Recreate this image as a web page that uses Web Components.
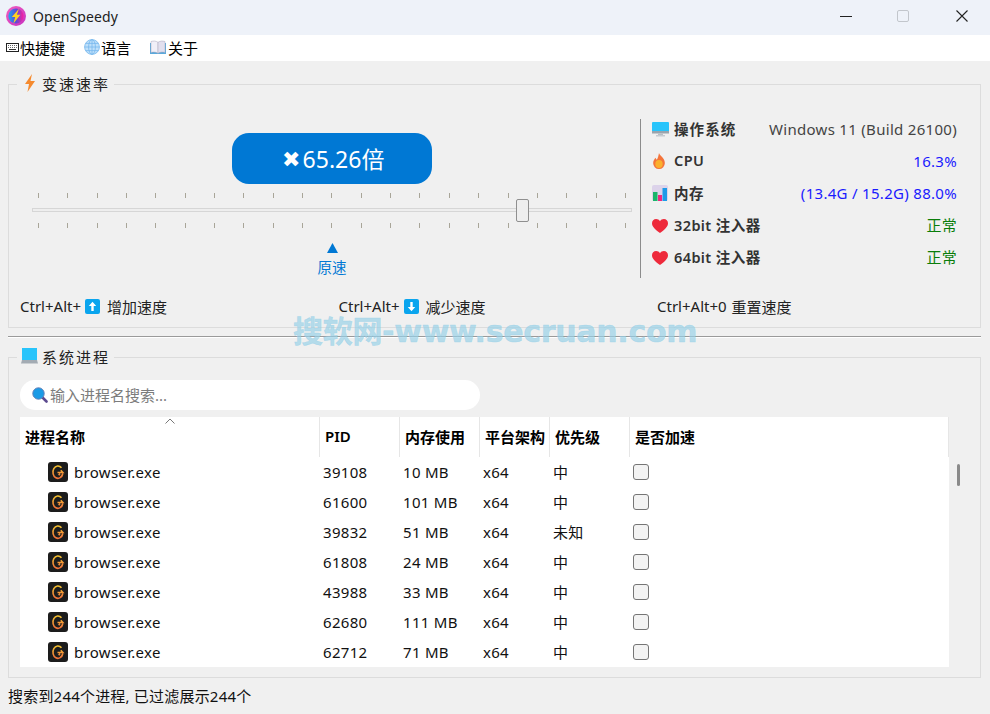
<!DOCTYPE html>
<html lang="zh">
<head>
<meta charset="utf-8">
<title>OpenSpeedy</title>
<style>
  html, body { margin: 0; height: 100%; overflow: hidden; background: #f0f0f0; }
  body { font-family: "Noto Sans", "Noto Sans CJK SC", sans-serif; font-size: 15px; color: #111; }
  os-app { position: relative; }
</style>
</head>
<body>
<os-app></os-app>
<script>
(function () {
  'use strict';

  const icons = {
    app: `<svg width="20" height="20" viewBox="0 0 20 20"><defs><linearGradient id="r" x1="0" y1="0" x2="1" y2="1"><stop offset="0" stop-color="#f25fc0"/><stop offset="1" stop-color="#c72fc0"/></linearGradient><linearGradient id="c" x1="0" y1="0" x2="1" y2="0"><stop offset="0" stop-color="#1ea8f0"/><stop offset=".5" stop-color="#5a4ad8"/><stop offset="1" stop-color="#ff1f9c"/></linearGradient></defs><circle cx="10" cy="10" r="10" fill="url(#r)"/><circle cx="10" cy="10" r="7.600" fill="url(#c)"/><path d="M13 2.800 5.800 11h3.400l-1.800 6.400 7-8.600h-3.600z" fill="#ffd21f"/></svg>`,
    keyboard: `<svg width="15" height="12" viewBox="0 0 15 12"><rect x="1.500" y="2.500" width="12" height="8" fill="#fff" stroke="#222"/><path d="M3 4.500h9M3 6.500h9" stroke="#666" stroke-dasharray="1 1"/><path d="M4 8.500h7" stroke="#333"/></svg>`,
    globe: `<svg width="16" height="16" viewBox="0 0 16 16"><circle cx="8" cy="8" r="7.500" fill="#bfe0fa"/><g fill="none" stroke="#76b8ee" stroke-width=".8"><circle cx="8" cy="8" r="7.400"/><ellipse cx="8" cy="8" rx="3.400" ry="7.400"/><path d="M8 .6v14.800M.6 8h14.800M1.700 4.400h12.600M1.700 11.600h12.600"/></g></svg>`,
    book: `<svg width="16" height="15" viewBox="0 0 16 15"><path d="M0 3h16v11H0z" fill="#5aa9dc"/><path d="M1 1.500c2.500-.8 5-.6 7 .8v11c-2-1.400-4.500-1.500-7-.8z" fill="#f1eff8" stroke="#a8a5ba" stroke-width=".5"/><path d="M15 1.500c-2.500-.8-5-.6-7 .8v11c2-1.400 4.500-1.500 7-.8z" fill="#e2dfee" stroke="#a8a5ba" stroke-width=".5"/></svg>`,
    bolt: `<svg width="17" height="18" viewBox="0 0 17 18"><path d="M11 0 4 10h4l-1.500 8L14 7H9.500z" fill="#f58a2e"/></svg>`,
    monitor: `<svg width="17" height="15" viewBox="0 0 17 15"><rect y="0" width="17" height="10.500" rx="1" fill="#28c4fb"/><path d="M0 9h17v2.500H0z" fill="#9aa4ad"/><path d="M6 11.500h5v2H6z" fill="#b8bec4"/><path d="M4 13h9v1.500H4z" fill="#c6cbd0"/></svg>`,
    flame: `<svg width="14" height="16" viewBox="0 0 14 16"><path d="M7 0c.6 2.500 5.800 5 5.800 9.800A5.800 5.800 0 0 1 7 16a5.800 5.800 0 0 1-5.800-6.200C1.200 7.500 2.600 6 3.500 4.700 4 6 4.600 6.500 5 6.500 5.800 5 6.600 2.500 7 0z" fill="#f4743b"/><ellipse cx="7" cy="11" rx="3.700" ry="4" fill="#fbb02d"/></svg>`,
    chart: `<svg width="16" height="16" viewBox="0 0 16 16"><rect width="16" height="16" rx="2" fill="#dcd3ea"/><rect x="1" y="7" width="4.500" height="9" fill="#19b56b"/><rect x="6" y="10" width="4" height="6" fill="#f0287f"/><rect x="10.500" y="3" width="4.500" height="13" fill="#1d9be8"/></svg>`,
    heart: `<svg width="16" height="16" viewBox="0 0 16 16"><path d="M8 16C3 12.200 0 9.500 0 6.200 0 3.800 1.800 2 4.100 2 5.700 2 7.200 2.800 8 4.200 8.800 2.800 10.300 2 11.900 2 14.200 2 16 3.800 16 6.200 16 9.500 13 12.200 8 16z" fill="#ee2a3b"/></svg>`,
    up: `<svg width="15" height="15" viewBox="0 0 15 15"><rect width="15" height="15" rx="2" fill="#0aa5ee"/><path d="M7.500 2.800 11.200 7H8.700v5H6.300V7H3.800z" fill="#fff"/></svg>`,
    down: `<svg width="15" height="15" viewBox="0 0 15 15"><rect width="15" height="15" rx="2" fill="#0aa5ee"/><path d="M7.500 12.200 3.800 8h2.500V3h2.400v5h2.500z" fill="#fff"/></svg>`,
    laptop: `<svg width="17" height="16" viewBox="0 0 17 16"><rect x="1" y="0" width="15" height="12" fill="#28c4fb"/><path d="M1 12h15l1 3.500H0z" fill="#a3abb3"/></svg>`,
    search: `<svg width="16" height="16" viewBox="0 0 16 16"><path d="m9.500 9.500 5 5" stroke="#5c4a8f" stroke-width="2.600" stroke-linecap="round"/><circle cx="6.500" cy="6.500" r="5.700" fill="#1b9be6" stroke="#5f7fb8" stroke-width="1"/></svg>`,
    browser: `<svg width="20" height="20" viewBox="0 0 20 20"><defs><linearGradient id="g" x1="0" y1="0" x2="0" y2="1"><stop offset="0" stop-color="#f2c230"/><stop offset="1" stop-color="#f0703a"/></linearGradient></defs><rect width="20" height="20" rx="3" fill="#1c1c1c"/><path d="M13.500 5.800A5 6.200 0 1 0 14.800 11.500M9.500 10.500h5.300l-2-2.200M12 11.500l-1.300 1.800" fill="none" stroke="url(#g)" stroke-width="1.600"/></svg>`
  };

  // base for every element here: shadow root filled from a string
  class ShadowElement extends HTMLElement {
    constructor() {
      super();
      this.attachShadow({ mode: 'open' }).innerHTML = this.template();
    }
    template() { return ''; }
  }

  class OsTitlebar extends ShadowElement {
    template() {
      return `<style>
        :host { display: flex; align-items: center; height: 35px; background: #eef2f9; flex: none; }
        .logo { display: flex; margin: -3px 7px 0 6px; }
        .title { font-size: 14px; letter-spacing: .1px; color: #222; flex: 1; margin-top: -3px; }
        .ctl { display: flex; width: 58px; justify-content: center; margin-top: -3px; }
        svg { display: block; }
      </style>
      <span class="logo">${icons.app}</span>
      <span class="title">OpenSpeedy</span>
      <span class="ctl" style="margin-right:-1px"><svg width="12" height="12"><path d="M0 6.500h12" stroke="#222"/></svg></span>
      <span class="ctl" style="margin-right:1px"><svg width="12" height="12"><rect x=".5" y=".5" width="11" height="11" rx="1.500" fill="none" stroke="#c2c6cc"/></svg></span>
      <span class="ctl" style="margin-right:-1px"><svg width="12" height="12"><path d="m.5.500 11 11m0-11-11 11" stroke="#222" stroke-width="1.100"/></svg></span>`;
    }
  }

  class OsMenubar extends ShadowElement {
    template() {
      return `<style>
        :host { display: flex; align-items: center; height: 26px; box-sizing: border-box; padding: 0 0 2px 5px; background: #fff; flex: none; gap: 19px; color: #000; font-size: 15px; }
        span { display: flex; align-items: center; gap: 1px; }
        svg { display: block; }
      </style>
      <span style="gap:0">${icons.keyboard}快捷键</span>
      <span>${icons.globe}语言</span>
      <span style="gap:2px">${icons.book}关于</span>`;
    }
  }

  class GroupBox extends ShadowElement {
    template() {
      return `<style>
        :host { display: block; }
        fieldset { margin: 0; padding: 0 11px; border: 1px solid #dcdcdc; height: 100%; box-sizing: border-box; min-width: 0; }
        legend { margin-left: -3px; padding: 0 4px 2px 4px; box-sizing: border-box; display: flex; align-items: center; gap: 4px; height: 22px; font-size: 15px; letter-spacing: 2px; color: #222; }
      </style>
      <fieldset><legend><slot name="icon"></slot><slot name="title"></slot></legend><slot></slot></fieldset>`;
    }
  }

  class SpeedSlider extends ShadowElement {
    template() {
      const ticks = new Array(21).fill('<i></i>').join('');
      return `<style>
        :host { display: block; position: relative; width: 600px; height: 35px; }
        .ticks { display: flex; justify-content: space-between; padding: 0 6px; height: 5px; }
        .ticks i { width: 1px; background: #a8a598; }
        .groove { height: 4px; margin: 10px 0 11px; background: #eeeeee; border: 1px solid #d6d6d6; box-sizing: border-box; }
        .handle { position: absolute; left: 484px; top: 6px; width: 13px; height: 23px; box-sizing: border-box; background: #eee; border: 1px solid #8f8f8f; border-radius: 2px; }
      </style>
      <div class="ticks">${ticks}</div>
      <div class="groove"></div>
      <div class="ticks">${ticks}</div>
      <div class="handle"></div>`;
    }
  }

  class InfoRow extends ShadowElement {
    template() {
      return `<style>
        :host { display: flex; align-items: center; height: 32px; flex: none; }
        .icon { display: flex; width: 22px; flex: none; }
        .label { font-weight: 600; color: #333; letter-spacing: var(--label-spacing, .4px); font-size: 14.500px; margin-top: -2px; }
        .value { margin-left: auto; color: var(--value-color, #444); letter-spacing: .3px; margin-top: -1px; }
      </style>
      <span class="icon"><slot name="icon"></slot></span>
      <span class="label"><slot name="label"></slot></span>
      <span class="value"><slot></slot></span>`;
    }
  }

  class SpeedPanel extends ShadowElement {
    template() {
      return `<style>
        :host { display: block; height: 255px; flex: none; }
        group-box { height: 100%; }
        .top { display: flex; margin-top: 24px; height: 159px; }
        .left { width: 620px; box-sizing: border-box; padding: 14px 8px 0 12px; display: flex; flex-direction: column; align-items: center; }
        .badge { width: 200px; height: 51px; box-sizing: border-box; padding: 0 0 2px 2px; border-radius: 17px; background: #0078d4; color: #fff; display: flex; align-items: center; justify-content: center; font-size: 23px; gap: 3px; }
        speed-slider { margin-top: 9px; }
        .mark { color: #0078d4; font-size: 14.500px; margin-top: 15px; display: flex; flex-direction: column; align-items: center; line-height: 20px; }
        .mark svg { display: block; margin-bottom: 4px; }
        .right { width: 317px; border-left: 1px solid #8c8c8c; padding-left: 11px; box-sizing: border-box; }
        .rows { display: flex; flex-direction: column; margin-top: -6px; }
        .blue { --value-color: #1a1aff; }
        .green { --value-color: #0a7d0a; }
        .os { --label-spacing: 1.100px; }
        .keys { display: grid; grid-template-columns: 318.500px 318.500px 1fr; margin-top: 18px; font-size: 15px; color: #222; }
        .keys span { display: flex; align-items: center; gap: 4px; height: 20px; }
        .keys svg { display: block; }
        .keys b { font-weight: 400; margin-left: 3px; }
        .keys .plain { margin-left: 1px; }
        [slot=icon] { display: flex; }
      </style>
      <group-box>
        <span slot="icon">${icons.bolt}</span>
        <span slot="title">变速速率</span>
        <div class="top">
          <div class="left">
            <div class="badge"><span style="font-size:22px">✖</span>65.26倍</div>
            <speed-slider></speed-slider>
            <div class="mark"><svg width="11" height="10"><path d="M5.500 0 11 10H0z" fill="#0078d4"/></svg>原速</div>
          </div>
          <div class="right"><div class="rows">
            <info-row class="os"><span slot="icon">${icons.monitor}</span><span slot="label">操作系统</span>Windows 11 (Build 26100)</info-row>
            <info-row class="blue"><span slot="icon">${icons.flame}</span><span slot="label">CPU</span>16.3%</info-row>
            <info-row class="blue"><span slot="icon">${icons.chart}</span><span slot="label">内存</span>(13.4G / 15.2G) 88.0%</info-row>
            <info-row class="green"><span slot="icon">${icons.heart}</span><span slot="label">32bit 注入器</span>正常</info-row>
            <info-row class="green"><span slot="icon">${icons.heart}</span><span slot="label">64bit 注入器</span>正常</info-row>
          </div></div>
        </div>
        <div class="keys">
          <span>Ctrl+Alt+${icons.up}<b>增加速度</b></span>
          <span>Ctrl+Alt+${icons.down}<b>减少速度</b></span>
          <span>Ctrl+Alt+0<b class="plain">重置速度</b></span>
        </div>
      </group-box>`;
    }
  }

  const rows = [
    ['39108', '10 MB', '中'],
    ['61600', '101 MB', '中'],
    ['39832', '51 MB', '未知'],
    ['61808', '24 MB', '中'],
    ['43988', '33 MB', '中'],
    ['62680', '111 MB', '中'],
    ['62712', '71 MB', '中']
  ];

  class ProcessTable extends ShadowElement {
    template() {
      const heads = ['进程名称', 'PID', '内存使用', '平台架构', '优先级', '是否加速'];
      return `<style>
        :host { display: block; width: 929px; height: 250px; background: #fff; overflow: hidden; color: #111; }
        .grid { display: grid; grid-template-columns: 300px 80px 80px 70px 80px 319px; }
        .row { display: contents; }
        .th { height: 40px; display: flex; align-items: center; padding: 0 0 2px 5px; box-sizing: border-box; border-right: 1px solid #e6e6e6; font-size: 15px; font-weight: 600; color: #000; position: relative; }
        .sort { position: absolute; left: 145px; top: 1px; display: block; }
        .td { height: 30px; box-sizing: border-box; display: flex; align-items: center; padding-left: 3px; font-size: 15px; letter-spacing: .3px; }
        .cjk { padding-bottom: 2px; }
        .name { padding-left: 28px; gap: 6px; }
        .name svg { display: block; }
        input { appearance: none; -webkit-appearance: none; margin: 0; width: 16px; height: 16px; box-sizing: border-box; border: 1px solid #757575; border-radius: 3px; background: #f3f3f3; }
      </style>
      <div class="grid">
        ${heads.map((h, i) => `<div class="th">${h}${i === 0 ? '<svg class="sort" width="10" height="6"><path d="M.5 5.500 5 1l4.500 4.500" fill="none" stroke="#777"/></svg>' : ''}</div>`).join('')}
        ${rows.map(r => `<div class="row">
          <div class="td name">${icons.browser}browser.exe</div>
          <div class="td">${r[0]}</div><div class="td">${r[1]}</div><div class="td">x64</div><div class="td cjk">${r[2]}</div>
          <div class="td"><input type="checkbox" aria-label="是否加速"></div>
        </div>`).join('')}
      </div>`;
    }
  }

  class ProcessPanel extends ShadowElement {
    template() {
      return `<style>
        :host { display: block; height: 332px; flex: none; }
        group-box { height: 100%; }
        .search { display: flex; align-items: center; gap: 2px; width: 460px; height: 30px; margin-top: 12px; padding-left: 12px; box-sizing: border-box; background: #fff; border-radius: 15px; color: #7c7c7c; font-size: 15px; }
        .search svg { display: block; }
        .search span { margin-top: -2px; }
        .wrap { display: flex; margin-top: 7px; }
        .thumb { width: 3px; height: 22px; margin: 47px 0 0 8px; background: #8a8a8a; border-radius: 2px; }
        [slot=icon] { display: flex; }
      </style>
      <group-box>
        <span slot="icon">${icons.laptop}</span>
        <span slot="title">系统进程</span>
        <div class="search">${icons.search}<span>输入进程名搜索...</span></div>
        <div class="wrap"><process-table></process-table><div class="thumb"></div></div>
      </group-box>`;
    }
  }

  class WaterMark extends ShadowElement {
    template() {
      return `<style>
        :host { position: absolute; left: 293px; top: 315px; font: 700 30px/34px "DejaVu Sans", "Noto Sans CJK SC", sans-serif; color: rgba(150, 208, 232, .68); -webkit-text-stroke: .5px rgba(150, 208, 232, .68); white-space: nowrap; pointer-events: none; letter-spacing: -.3px; }
      </style>搜软网-www.secruan.com`;
    }
  }

  class OsApp extends ShadowElement {
    template() {
      return `<style>
        :host { display: flex; flex-direction: column; height: 714px; background: #f0f0f0; }
        .body { display: flex; flex-direction: column; padding: 12px 9px 0 8px; }
        hr { margin: 8px 0 8px; border: 0; height: 2px; flex: none; background: linear-gradient(#9a9a9a 50%, #fff 50%); }
        .status { font-size: 15px; letter-spacing: .2px; color: #111; padding: 7px 8px; }
      </style>
      <os-titlebar></os-titlebar>
      <os-menubar></os-menubar>
      <div class="body">
        <speed-panel></speed-panel>
        <hr>
        <process-panel></process-panel>
      </div>
      <div class="status">搜索到244个进程, 已过滤展示244个</div>
      <water-mark></water-mark>`;
    }
  }

  customElements.define('os-titlebar', OsTitlebar);
  customElements.define('os-menubar', OsMenubar);
  customElements.define('group-box', GroupBox);
  customElements.define('speed-slider', SpeedSlider);
  customElements.define('info-row', InfoRow);
  customElements.define('speed-panel', SpeedPanel);
  customElements.define('process-table', ProcessTable);
  customElements.define('process-panel', ProcessPanel);
  customElements.define('water-mark', WaterMark);
  customElements.define('os-app', OsApp);
})();
</script>
</body>
</html>
